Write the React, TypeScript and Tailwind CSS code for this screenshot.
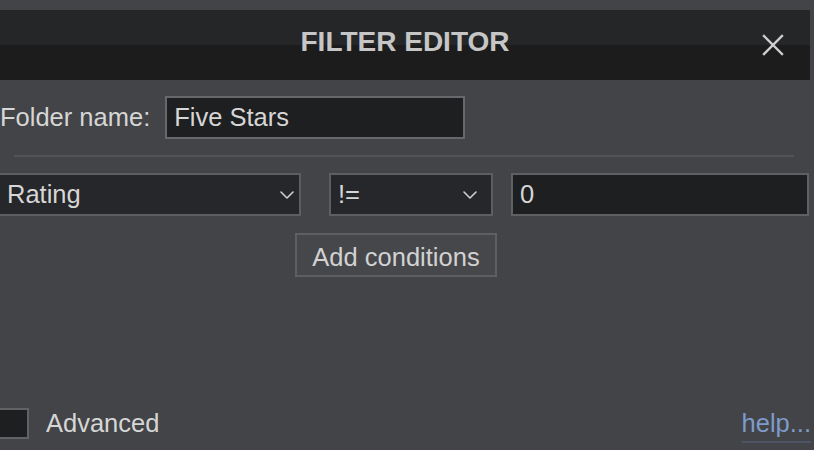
import { ChevronDown } from 'lucide-react';

export default function App() {
  return (
    <main
      className="flex h-[450px] w-[814px] flex-col overflow-hidden bg-[#434447] pt-[10px] text-[25.5px] text-[#d6d6d6]"
      style={{ fontFamily: '"Liberation Sans", Arial, sans-serif' }}
    >
      <header className="relative mr-[4px] flex h-[70px] items-center justify-center bg-[linear-gradient(to_bottom,#252628_50%,#1c1c1d_50%)] pb-[6px]">
        <h1 className="text-[28px] font-bold leading-none text-[#c6c6c6]">FILTER EDITOR</h1>
        <button className="absolute left-[760px] top-[22px] text-[#cfcfcf]">
          <svg width="26" height="26" viewBox="0 0 26 26" fill="none" stroke="currentColor" strokeWidth="2.4" strokeLinecap="square">
            <path d="M4 4 L22 22 M22 4 L4 22" />
          </svg>
        </button>
      </header>

      <div className="mt-[16px] flex items-center gap-[15px]">
        <label className="leading-none">Folder name:</label>
        <div className="flex h-[43px] w-[300px] items-center border-2 border-[#67686c] bg-[#1e1f21] pl-[7px] leading-none">
          Five Stars
        </div>
      </div>

      <div className="ml-[14px] mt-[16px] h-[2px] w-[780px] bg-[#525356]" />

      <div className="mt-[16px] flex items-center">
        <Select className="-ml-[10px] w-[311px] pl-[15px] pr-0" value="Rating" />
        <Select className="ml-[28px] w-[164px] pl-[7px] pr-[9px]" value="!=" />
        <div className="ml-[18px] flex h-[43px] w-[298px] items-center border-2 border-[#5f6063] bg-[#1e1f21] pl-[7px] leading-none">
          0
        </div>
      </div>

      <button className="ml-[295px] mt-[17px] flex h-[44px] w-[202px] items-center justify-center border-2 border-[#5e5f62] bg-[#46474a] pt-[5px] leading-none text-[#d2d2d2]">
        Add conditions
      </button>

      <div className="mb-[11px] mt-auto flex items-center">
        <span className="-ml-[2px] h-[31px] w-[31px] border-2 border-[#616265] bg-[#1e1f21]" />
        <span className="ml-[17px] leading-none">Advanced</span>
        <a className="ml-auto mr-[3px] leading-none text-[#7f9bcb] underline decoration-[#4c5466] decoration-2 underline-offset-[9px]">
          help...
        </a>
      </div>
    </main>
  );
}

function Select({ className, value }: { className: string; value: string }) {
  return (
    <div
      className={`flex h-[43px] shrink-0 items-center justify-between border-2 border-[#5d5e61] bg-[#26272a] leading-none ${className}`}
    >
      <span>{value}</span>
      <ChevronDown className="size-[24px] text-[#cfcfcf]" strokeWidth={1.6} />
    </div>
  );
}
